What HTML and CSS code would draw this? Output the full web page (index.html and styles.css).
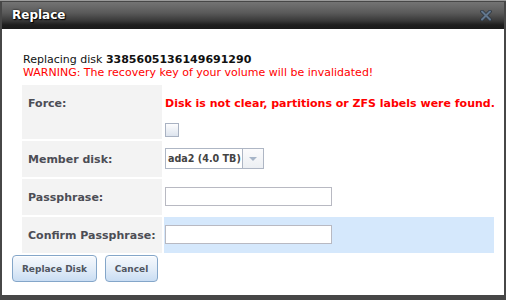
FILE: index.html
```html
<!DOCTYPE html>
<html>
<head>
<meta charset="utf-8">
<link rel="stylesheet" href="styles.css">
</head>
<body>
<div class="dialog">
  <div class="titlebar">
    <span class="title">Replace</span>
    <svg class="close" width="12" height="11" viewBox="0 0 12 11">
      <path d="M2 1.5 L10 9.5 M10 1.5 L2 9.5" stroke="#2f3842" stroke-width="3.6" stroke-linecap="round"/>
      <path d="M2 1.5 L10 9.5 M10 1.5 L2 9.5" stroke="#62778e" stroke-width="2" stroke-linecap="round"/>
    </svg>
  </div>
  <div class="content">
    <div class="intro">
      <div>Replacing disk <b>3385605136149691290</b></div>
      <div class="warn">WARNING: The recovery key of your volume will be invalidated!</div>
    </div>
    <div class="form">
      <div class="label">Force:</div>
      <div class="field field-force">
        <div class="error">Disk is not clear, partitions or ZFS labels were found.</div>
        <span class="checkbox"></span>
      </div>
      <div class="label">Member disk:</div>
      <div class="field">
        <div class="select"><span class="select-text">ada2 (4.0 TB)</span><span class="select-arrow"><span class="tri"></span></span></div>
      </div>
      <div class="label">Passphrase:</div>
      <div class="field"><span class="input"></span></div>
      <div class="label">Confirm Passphrase:</div>
      <div class="field field-active"><span class="input"></span></div>
    </div>
    <div class="buttons">
      <span class="btn btn-primary">Replace Disk</span>
      <span class="btn btn-cancel">Cancel</span>
    </div>
  </div>
</div>
</body>
</html>
```
FILE: styles.css
```css
html, body {
  margin: 0;
  padding: 0;
}
body {
  width: 506px;
  height: 300px;
  background: #474747;
  border-top: 1px solid #9a9a9a;
  box-sizing: border-box;
  font-family: "DejaVu Sans", Verdana, sans-serif;
  overflow: hidden;
}
.dialog {
  margin: 1px 2px 0 2px;
  width: 502px;
}
.titlebar {
  height: 27px;
  background: linear-gradient(#747474, #5a5a5a 40%, #383838 70%, #1e1e1e 85%, #1a1a1a);
  display: flex;
  align-items: center;
  justify-content: space-between;
  padding: 0 12px 0 10px;
  box-sizing: border-box;
}
.title {
  color: #fff;
  font-weight: bold;
  font-size: 12px;
  text-shadow: 0 0 2px #000, 1px 1px 1px #000;
  margin-top: -1px;
}
.close {
  display: block;
  margin-top: -1px;
}
.content {
  background: #fff;
  height: 266px;
  box-sizing: border-box;
  padding: 24px 0 0 18px;
}
.intro {
  font-size: 11px;
  line-height: 13px;
  color: #111;
  padding-left: 3px;
  margin-bottom: 4px;
}
.intro b {
  font-weight: bold;
}
.warn {
  color: #f00;
}
.form {
  display: grid;
  grid-template-columns: 140px 330px;
  grid-template-rows: 54px 36px 36px 36px;
  gap: 2px;
  padding: 2px;
}
.label {
  background: #f3f3f3;
  font-size: 11px;
  line-height: 13px;
  font-weight: bold;
  color: #4c4d55;
  padding: 12px 0 0 6px;
  white-space: nowrap;
}
.field {
  padding: 0 0 0 1px;
}
.field-force {
  padding-top: 12px;
}
.field-active {
  background: #d5e8fc;
}
.error {
  color: #f00;
  font-weight: bold;
  font-size: 11px;
  line-height: 13px;
  white-space: nowrap;
}
.checkbox {
  display: block;
  width: 14px;
  height: 14px;
  box-sizing: border-box;
  border: 1px solid #a9b2c2;
  background: linear-gradient(#fdfdfe, #dde4ee);
  margin-top: 13px;
}
.select {
  margin-top: 7px;
  display: flex;
  width: 99px;
  height: 21px;
  box-sizing: border-box;
  border: 1px solid #aeb6c4;
  background: #fff;
}
.select-text {
  flex: 1;
  font-size: 9.6px;
  font-weight: bold;
  color: #444;
  line-height: 19px;
  padding-left: 2px;
  white-space: nowrap;
}
.select-arrow {
  width: 20px;
  border-left: 1px solid #aeb6c4;
  background: linear-gradient(#fbfbfc, #eceff3);
  display: flex;
  align-items: center;
  justify-content: center;
}
.tri {
  width: 0;
  height: 0;
  border-left: 4px solid transparent;
  border-right: 4px solid transparent;
  border-top: 4px solid #a7b5c8;
}
.input {
  display: block;
  margin-top: 8px;
  width: 167px;
  height: 19px;
  box-sizing: border-box;
  border: 1px solid #b8b9c2;
  background: #fff;
}
.buttons {
  display: flex;
  gap: 8px;
  margin: 0 0 0 -8px;
}
.btn {
  height: 27px;
  box-sizing: border-box;
  border: 1px solid #84a6c9;
  border-radius: 4px;
  background: linear-gradient(#f6f9fd, #e3edf8 50%, #c9ddf3);
  box-shadow: inset 0 1px 0 #fff;
  font-size: 9px;
  font-weight: bold;
  color: #505560;
  display: flex;
  align-items: center;
  justify-content: center;
}
.btn-primary {
  width: 85px;
}
.btn-cancel {
  width: 53px;
}
```
